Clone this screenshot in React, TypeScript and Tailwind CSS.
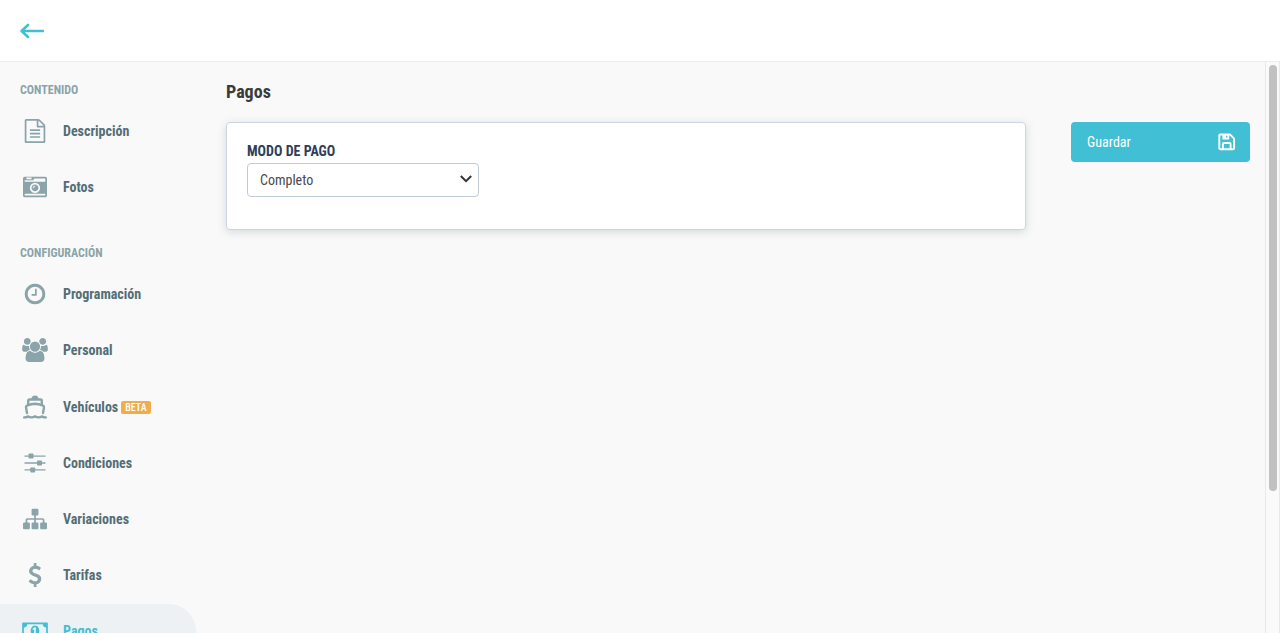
import type { ReactNode } from "react";
import clsx from "clsx";

interface GlyphProps {
  viewBox?: string;
  className?: string;
  children: ReactNode;
}

const Glyph = ({
  viewBox = "0 0 1792 1792",
  className = "w-6",
  children,
}: GlyphProps) => (
  <svg
    aria-hidden="true"
    viewBox={viewBox}
    fill="currentColor"
    className={clsx("h-6", className)}
  >
    {children}
  </svg>
);

const FileIcon = () => (
  <Glyph>
    <path d="M1596 380q28 28 48 76t20 88v1152q0 40-28 68t-68 28h-1344q-40 0-68-28t-28-68v-1600q0-40 28-68t68-28h896q40 0 88 20t76 48zm-444-244v376h376q-10-29-22-41l-313-313q-12-12-41-22zm384 1528v-1024h-416q-40 0-68-28t-28-68v-416h-768v1536h1280zm-1024-864q0-14 9-23t23-9h704q14 0 23 9t9 23v64q0 14-9 23t-23 9h-704q-14 0-23-9t-9-23v-64zm736 224q14 0 23 9t9 23v64q0 14-9 23t-23 9h-704q-14 0-23-9t-9-23v-64q0-14 9-23t23-9h704zm0 256q14 0 23 9t9 23v64q0 14-9 23t-23 9h-704q-14 0-23-9t-9-23v-64q0-14 9-23t23-9h704z" />
  </Glyph>
);

const CameraIcon = () => (
  <Glyph>
    <path d="M928 832q0-14-9-23t-23-9q-66 0-113 47t-47 113q0 14 9 23t23 9 23-9 9-23q0-40 28-68t68-28q14 0 23-9t9-23zm224 130q0 106-75 181t-181 75-181-75-75-181 75-181 181-75 181 75 75 181zm-1024 574h1536v-128h-1536v128zm1152-574q0-159-112.5-271.5t-271.5-112.5-271.5 112.5-112.5 271.5 112.5 271.5 271.5 112.5 271.5-112.5 112.5-271.5zm-1024-642h384v-128h-384v128zm-128 192h1536v-256h-828l-64 128h-644v128zm1664-256v1280q0 53-37.5 90.5t-90.5 37.5h-1536q-53 0-90.5-37.5t-37.5-90.5v-1280q0-53 37.5-90.5t90.5-37.5h1536q53 0 90.5 37.5t37.5 90.5z" />
  </Glyph>
);

const ClockIcon = () => (
  <Glyph>
    <path d="M1024 544v448q0 14-9 23t-23 9h-320q-14 0-23-9t-9-23v-64q0-14 9-23t23-9h224v-352q0-14 9-23t23-9h64q14 0 23 9t9 23zm416 352q0-148-73-273t-198-198-273-73-273 73-198 198-73 273 73 273 198 198 273 73 273-73 198-198 73-273zm224 0q0 209-103 385.5t-279.5 279.5-385.5 103-385.5-103-279.5-279.5-103-385.5 103-385.5 279.5-279.5 385.5-103 385.5 103 279.5 279.5 103 385.5z" />
  </Glyph>
);

const UsersIcon = () => (
  <Glyph viewBox="64 0 1920 1792" className="w-[26px]">
    <path d="M657 896q-162 5-265 128h-134q-82 0-138-40.5t-56-118.5q0-353 124-353 6 0 43.5 21t97.5 42.5 119 21.5q67 0 133-23-5 37-5 66 0 139 81 256zm1071 637q0 120-73 189.5t-194 69.5h-874q-121 0-194-69.5t-73-189.5q0-53 3.5-103.5t14-109 26.5-108.5 43-97.5 62-81 85.5-53.5 111.5-20q10 0 43 21.5t73 48 107 48 135 21.5 135-21.5 107-48 73-48 43-21.5q61 0 111.5 20t85.5 53.5 62 81 43 97.5 26.5 108.5 14 109 3.5 103.5zm-1024-1277q0 106-75 181t-181 75-181-75-75-181 75-181 181-75 181 75 75 181zm704 384q0 159-112.5 271.5t-271.5 112.5-271.5-112.5-112.5-271.5 112.5-271.5 271.5-112.5 271.5 112.5 112.5 271.5zm576 225q0 78-56 118.5t-138 40.5h-134q-103-123-265-128 81-117 81-256 0-29-5-66 66 23 133 23 59 0 119-21.5t97.5-42.5 43.5-21q124 0 124 353zm-128-609q0 106-75 181t-181 75-181-75-75-181 75-181 181-75 181 75 75 181z" />
  </Glyph>
);

const ShipIcon = () => (
  <Glyph viewBox="0 0 24 24">
    <g
      fill="none"
      stroke="currentColor"
      strokeWidth="2.4"
      strokeLinecap="round"
      strokeLinejoin="round"
    >
      <path d="M5.200 9.300V5.800Q5.200 4.500 6.500 4.500h11q1.300 0 1.300 1.300v3.500" />
      <path d="M4 18l-.9-5q-.3-2 1.400-2.600Q8 9 12 8.800q4 .2 7.500 1.600 1.700.6 1.400 2.600l-.9 5" />
      <path d="M1.200 22.400q2.200 0 3.600-1 1.700 1 3.600 1t3.600-1q1.700 1 3.600 1t3.600-1q1.400 1 3.600 1" />
    </g>
    <path d="M8.600 4.500V3Q9 .4 12 .4T15.400 3v1.500z" />
  </Glyph>
);

const SlidersIcon = () => (
  <Glyph viewBox="0 0 24 24">
    <path d="M1.500 4.400h21v1.400h-21zM1.500 11.300h21v1.400h-21zM1.500 18.200h21v1.400h-21z" />
    <rect x="5.500" y="2.600" width="5" height="5" rx=".8" />
    <rect x="14" y="9.500" width="5" height="5" rx=".8" />
    <rect x="7.200" y="16.400" width="5" height="5" rx=".8" />
  </Glyph>
);

const SitemapIcon = () => (
  <Glyph>
    <path d="M1792 1248v320q0 40-28 68t-68 28h-320q-40 0-68-28t-28-68v-320q0-40 28-68t68-28h96v-192h-512v192h96q40 0 68 28t28 68v320q0 40-28 68t-68 28h-320q-40 0-68-28t-28-68v-320q0-40 28-68t68-28h96v-192h-512v192h96q40 0 68 28t28 68v320q0 40-28 68t-68 28h-320q-40 0-68-28t-28-68v-320q0-40 28-68t68-28h96v-192q0-52 38-90t90-38h512v-192h-96q-40 0-68-28t-28-68v-320q0-40 28-68t68-28h320q40 0 68 28t28 68v320q0 40-28 68t-68 28h-96v192h512q52 0 90 38t38 90v192h96q40 0 68 28t28 68z" />
  </Glyph>
);

const DollarIcon = () => (
  <Glyph>
    <path d="M1362 1185q0 153-99.5 263.5t-258.5 136.5v175q0 14-9 23t-23 9h-135q-13 0-22.5-9.5t-9.5-22.5v-175q-66-9-127.5-31t-101.5-44.5-74-48-46.5-37.5-17.5-18q-17-21-2-41l103-135q7-10 23-12 15-2 24 9l2 2q113 99 243 125 37 8 74 8 81 0 142.5-43t61.5-122q0-28-15-53t-33.5-42-58.5-37.5-66-32-80-32.5q-39-16-61.5-25t-61.5-26.5-62.5-31-56.5-35.5-53.5-42.5-43.5-49-35.5-58-21-66.5-8.5-78q0-138 98-242t255-134v-180q0-13 9.5-22.5t22.5-9.5h135q14 0 23 9t9 23v176q57 6 110.5 23t87 33.5 63.5 37.5 39 29 15 14q17 18 5 38l-81 146q-8 15-23 16-14 3-27-7-3-3-14.5-12t-39-26.5-58.5-32-74.5-26-85.500-11.500q-95 0-155 43t-60 111q0 26 8.500 48t29.500 41.500 39.500 33 56 31 60.500 27 70 27.500q53 20 81 31.500t76 35 75.500 42.500 62 50 53 63.500 31.500 76.500 13 94z" />
  </Glyph>
);

const MoneyIcon = () => (
  <Glyph viewBox="0 0 1920 1792" className="w-[26px]">
    <path d="M768 1152h384v-96h-128v-448h-114l-148 137 77 80q42-37 55-57h2v288h-128v96zm512-256q0 70-21 142t-59.5 134-101.5 101-138 39-138-39-101.5-101-59.5-134-21-142 21-142 59.5-134 101.5-101 138-39 138 39 101.5 101 59.5 134 21 142zm512 256v-512q-106 0-181-75t-75-181h-1152q0 106-75 181t-181 75v512q106 0 181 75t75 181h1152q0-106 75-181t181-75zm128-832v1152q0 26-19 45t-45 19h-1792q-26 0-45-19t-19-45v-1152q0-26 19-45t45-19h1792q26 0 45 19t19 45z" />
  </Glyph>
);

interface Item {
  label: string;
  icon: ReactNode;
  badge?: string;
  active?: boolean;
}

const content: Item[] = [
  { label: "Descripción", icon: <FileIcon /> },
  { label: "Fotos", icon: <CameraIcon /> },
];

const settings: Item[] = [
  { label: "Programación", icon: <ClockIcon /> },
  { label: "Personal", icon: <UsersIcon /> },
  { label: "Vehículos", icon: <ShipIcon />, badge: "BETA" },
  { label: "Condiciones", icon: <SlidersIcon /> },
  { label: "Variaciones", icon: <SitemapIcon /> },
  { label: "Tarifas", icon: <DollarIcon /> },
  { label: "Pagos", icon: <MoneyIcon />, active: true },
];

const NavSection = ({ title, items }: { title: string; items: Item[] }) => (
  <section>
    <h2 className="px-5 text-xs leading-4 font-bold text-[#8aa4a9] uppercase">
      {title}
    </h2>
    <ul className="mt-1.5 flex flex-col gap-0.5">
      {items.map(({ label, icon, badge, active }) => (
        <li key={label}>
          <a
            href="#"
            aria-current={active ? "page" : undefined}
            className={clsx(
              "flex items-center rounded-r-full pl-5 text-sm font-bold",
              badge ? "h-[55px]" : "h-[54px]",
              active ? "bg-[#edf1f4] text-[#41bfd5]" : "text-[#546e76]"
            )}
          >
            <span
              className={clsx(
                "flex w-[30px] justify-center",
                !active && "text-[#8aa4a9]"
              )}
            >
              {icon}
            </span>
            <span className="ml-[13px]">{label}</span>
            {badge && (
              <span className="mt-0.5 ml-[3px] rounded-xs bg-[#f0ad4e] px-1 text-[10px] leading-[13px] font-medium text-white">
                {badge}
              </span>
            )}
          </a>
        </li>
      ))}
    </ul>
  </section>
);

export default function App() {
  return (
    <div className="flex h-screen flex-col overflow-hidden bg-[#f9f9f9] font-['Roboto_Condensed','Roboto',sans-serif]">
      <header className="flex h-[62px] shrink-0 items-center border-b border-[#ededed] bg-white px-5">
        <a href="#" aria-label="Volver" className="text-[#41bfd5]">
          <svg
            viewBox="0 0 24 16"
            fill="none"
            stroke="currentColor"
            strokeWidth="2.6"
            strokeLinecap="round"
            strokeLinejoin="round"
            className="h-4 w-6"
          >
            <path d="M8 2L1.600 8 8 14M2 8h21" />
          </svg>
        </a>
      </header>

      <div className="flex min-h-0 flex-1">
        <nav className="flex w-[196px] shrink-0 flex-col gap-[31px] overflow-y-auto pt-5 [scrollbar-width:none]">
          <NavSection title="Contenido" items={content} />
          <NavSection title="Configuración" items={settings} />
        </nav>

        <main className="min-w-0 flex-1 pt-[18px] pr-[15px] pl-[30px]">
          <h1 className="text-lg leading-6 font-bold text-[#3b3b3b]">Pagos</h1>
          <div className="mt-[18px] flex items-start gap-[45px]">
            <div className="flex min-w-0 flex-1 flex-col gap-0.5 rounded-sm border border-[#cbd6e2] bg-white px-5 pt-[18px] pb-8 shadow-[0_2px_10px_rgba(84,110,118,0.22)]">
              <label
                htmlFor="payment-mode"
                className="text-sm leading-5 font-bold text-[#2e4058] uppercase"
              >
                Modo de pago
              </label>
              <div className="relative w-[232px]">
                <select
                  id="payment-mode"
                  className="h-[34px] w-full appearance-none rounded border border-[#c0cbd8] bg-white px-3 text-sm text-[#4a4a4a]"
                >
                  <option>Completo</option>
                </select>
                <svg
                  aria-hidden="true"
                  viewBox="0 0 12 8"
                  fill="none"
                  stroke="#333"
                  strokeWidth="2"
                  className="pointer-events-none absolute top-3 right-[7px] h-2 w-3"
                >
                  <path d="M.8 1L6 6.200 11.200 1" />
                </svg>
              </div>
            </div>

            <button
              type="button"
              className="flex h-10 w-[179px] shrink-0 items-center justify-between rounded bg-[#41bfd5] pr-3.5 pl-4 text-sm text-white"
            >
              Guardar
              <svg
                aria-hidden="true"
                viewBox="0 0 18 18"
                fill="none"
                stroke="currentColor"
                strokeWidth="1.900"
                strokeLinejoin="round"
                className="h-[18px] w-[18px]"
              >
                <path d="M2.300 1.500h9.700l4.100 4.100v9.600q0 1-1 1H2.300q-1 0-1-1V2.500q0-1 1-1z" />
                <path d="M4.900 16v-5q0-1 1-1h5.700q1 0 1 1v5" />
                <path
                  d="M4.400 1.500h6.800v4.900H4.400zM8 2.600v2h1.400v-2z"
                  fill="currentColor"
                  fillRule="evenodd"
                  stroke="none"
                />
              </svg>
            </button>
          </div>
        </main>

        <div
          aria-hidden="true"
          className="w-[15px] shrink-0 border-x border-[#e8e8e8] bg-[#fafafa] pt-[3px] pr-0.5 pl-[3px]"
        >
          <div className="h-3/4 rounded-full bg-[#c1c1c1]" />
        </div>
      </div>
    </div>
  );
}
